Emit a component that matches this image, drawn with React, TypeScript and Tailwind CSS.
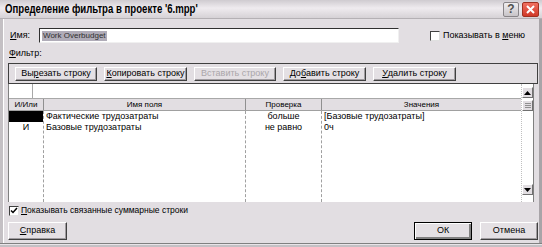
import React from 'react';

const FONT = "font-['Liberation_Sans','DejaVu_Sans',sans-serif]";

function Btn({ children, disabled, def, className = '' }: { children: React.ReactNode; disabled?: boolean; def?: boolean; className?: string }) {
  return (
    <div
      className={`flex items-center justify-center whitespace-nowrap bg-[#e4e0e4] border ${def ? 'border-black shadow-[inset_1px_1px_0_#fff,inset_-2px_-2px_0_#808080]' : 'border-t-white border-l-white border-r-[#404040] border-b-[#404040] shadow-[inset_-1px_-1px_0_#a09ca0]'} text-[9px] ${disabled ? 'text-[#aaa6aa]' : 'text-black'} ${className}`}
    >
      {children}
    </div>
  );
}

const ROWS = [
  { op: '', field: 'Фактические трудозатраты', test: 'больше', value: '[Базовые трудозатраты]', sel: true },
  { op: 'И', field: 'Базовые трудозатраты', test: 'не равно', value: '0ч', sel: false },
];

export default function App() {
  return (
    <div className={`w-[542px] h-[247px] bg-[#e2dee2] flex flex-col ${FONT} overflow-hidden`}>
      {/* Title bar */}
      <div className="h-[19px] shrink-0 flex items-center justify-between pl-[5px] pr-[3px] bg-[linear-gradient(180deg,#cfcbd0,#efebef_45%,#d6d2d6)] border-b border-[#b4b0b4]">
        <span className="inline-block origin-left scale-x-[0.8] text-[12px] font-bold text-black whitespace-nowrap">Определение фильтра в проекте '6.mpp'</span>
        <div className="flex gap-[3px]">
          <div className="w-[16px] h-[15px] rounded-[2px] bg-[linear-gradient(180deg,#f0eef0,#c8c4c8)] border border-[#888488] flex items-center justify-center text-[12px] font-bold text-[#505050]">?</div>
          <div className="w-[17px] h-[15px] rounded-[2px] bg-[linear-gradient(180deg,#f07060,#d03828)] border border-[#a03020] flex items-center justify-center">
            <svg width="9" height="9" viewBox="0 0 9 9"><path d="M1 1 L8 8 M8 1 L1 8" stroke="#fff" strokeWidth="2" /></svg>
          </div>
        </div>
      </div>

      <div className="flex-1 flex flex-col pl-[5px] pr-[1px] border-l-[3px] border-l-[#c4c0c4] border-r-[3px] border-r-[#a8a4a8] shadow-[inset_1px_0_0_#fff]">
        {/* Name row */}
        <div className="flex items-center h-[15px] mt-[9px]">
          <span className="text-[9px] w-[31px] pl-[2px]"><u>И</u>мя:</span>
          <div className="w-[360px] h-[15px] bg-white border border-t-[#303030] border-l-[#303030] border-r-[#f0f0f0] border-b-[#f0f0f0] flex items-center px-[2px]">
            <span className="bg-[#b0acb8] text-[#303030] text-[8px] px-[1px] leading-[10px]">Work Overbudget</span>
          </div>
          <div className="ml-[31px] flex items-center gap-[3px]">
            <div className="w-[10px] h-[10px] bg-white border border-t-[#404040] border-l-[#404040] border-r-[#e0e0e0] border-b-[#e0e0e0]" />
            <span className="text-[9px] whitespace-nowrap">Показывать в <u>м</u>еню</span>
          </div>
        </div>

        <div className="text-[9px] mt-[5px] h-[11px] leading-[11px] pl-[1px]"><u>Ф</u>ильтр:</div>

        {/* Toolbar */}
        <div className="mt-[4px] h-[21px] border border-[#404040] flex items-center pl-[6px] gap-[7px]">
          <Btn className="w-[82px] h-[14px]">Вы<u>р</u>езать строку</Btn>
          <Btn className="w-[83px] h-[14px]"><u>К</u>опировать строку</Btn>
          <Btn className="w-[82px] h-[14px]" disabled>Вставить строку</Btn>
          <Btn className="w-[83px] h-[14px]">До<u>б</u>авить строку</Btn>
          <Btn className="w-[83px] h-[14px]"><u>У</u>далить строку</Btn>
        </div>

        {/* Grid */}
        <div className="h-[118px] w-[526px] bg-white border-x border-[#808080] flex">
          <div className="flex-1 flex flex-col">
            <div className="h-[15px] flex border-b border-[#a8a8a8]">
              <div className="w-[24px] border-r border-[#a8a8a8]" />
            </div>
            <div className="flex h-[12px] bg-[#e2dee2] text-[8px] border-b border-[#a0a0a0]">
              <div className="w-[35px] border-r border-[#909090] flex items-center justify-center">И/Или</div>
              <div className="w-[202px] border-r border-[#909090] flex items-center justify-center">Имя поля</div>
              <div className="w-[76px] border-r border-[#909090] flex items-center justify-center">Проверка</div>
              <div className="flex-1 flex items-center justify-center">Значения</div>
            </div>
            <div className="flex-1 flex text-[9px]">
              <div className="w-[35px] border-r border-dashed border-[#a0a0a0] flex flex-col">
                {ROWS.map((r, i) => (
                  <div key={i} className={`h-[11px] flex items-center justify-center ${r.sel ? 'bg-black' : ''}`}>{r.op}</div>
                ))}
              </div>
              <div className="w-[202px] border-r border-dashed border-[#a0a0a0] flex flex-col">
                {ROWS.map((r, i) => (
                  <div key={i} className="h-[11px] flex items-center pl-[2px] whitespace-nowrap">{r.field}</div>
                ))}
              </div>
              <div className="w-[76px] border-r border-dashed border-[#a0a0a0] flex flex-col">
                {ROWS.map((r, i) => (
                  <div key={i} className="h-[11px] flex items-center justify-center whitespace-nowrap">{r.test}</div>
                ))}
              </div>
              <div className="flex-1 flex flex-col">
                {ROWS.map((r, i) => (
                  <div key={i} className="h-[11px] flex items-center pl-[2px] whitespace-nowrap">{r.value}</div>
                ))}
              </div>
            </div>
          </div>
          {/* Scrollbar */}
          <div className="w-[12px] flex flex-col items-center pt-[3px] border-l border-dotted border-[#c0c0c0]">
            <div className="w-[11px] h-[11px] bg-[#e2dee2] border border-t-white border-l-white border-r-[#707070] border-b-[#707070] flex items-center justify-center">
              <svg width="7" height="4" viewBox="0 0 7 4"><path d="M0 4 L3.5 0 L7 4 Z" fill="#000" /></svg>
            </div>
            <div className="w-[11px] h-[11px] mt-[2px] bg-[#e2dee2] border border-t-white border-l-white border-r-[#707070] border-b-[#707070] flex flex-col items-center justify-center gap-[1px]">
              <div className="w-[6px] h-px bg-[#909090]" />
              <div className="w-[6px] h-px bg-[#909090]" />
              <div className="w-[6px] h-px bg-[#909090]" />
            </div>
            <div className="flex-1" />
            <div className="w-[11px] h-[11px] mb-[7px] bg-[#e2dee2] border border-t-white border-l-white border-r-[#707070] border-b-[#707070] flex items-center justify-center">
              <svg width="7" height="4" viewBox="0 0 7 4"><path d="M0 0 L3.5 4 L7 0 Z" fill="#000" /></svg>
            </div>
          </div>
        </div>

        {/* Summary checkbox */}
        <div className="flex items-center gap-[2px] mt-[3px] h-[11px] pl-[1px]">
          <div className="w-[10px] h-[10px] bg-white border border-t-[#404040] border-l-[#404040] border-r-[#e0e0e0] border-b-[#e0e0e0] flex items-center justify-center">
            <svg width="8" height="7" viewBox="0 0 8 7"><path d="M1 3.5 L3 5.5 L7 1" stroke="#000" strokeWidth="1.5" fill="none" /></svg>
          </div>
          <span className="text-[8.5px] whitespace-nowrap"><u>П</u>оказывать связанные суммарные строки</span>
        </div>

        {/* Bottom buttons */}
        <div className="flex items-center mt-[6px]">
          <Btn className="w-[59px] h-[18px]"><u>С</u>правка</Btn>
          <div className="flex-1" />
          <Btn className="w-[58px] h-[18px] mr-[4px]" def>ОК</Btn>
          <Btn className="w-[58px] h-[18px] ml-[4px]">Отмена</Btn>
        </div>
        <div className="flex-1" />
      </div>
      <div className="h-[4px] shrink-0 border-t border-[#808080] bg-[#c4c0c4] shadow-[inset_0_1px_0_#e8e4e8]" />
    </div>
  );
}
